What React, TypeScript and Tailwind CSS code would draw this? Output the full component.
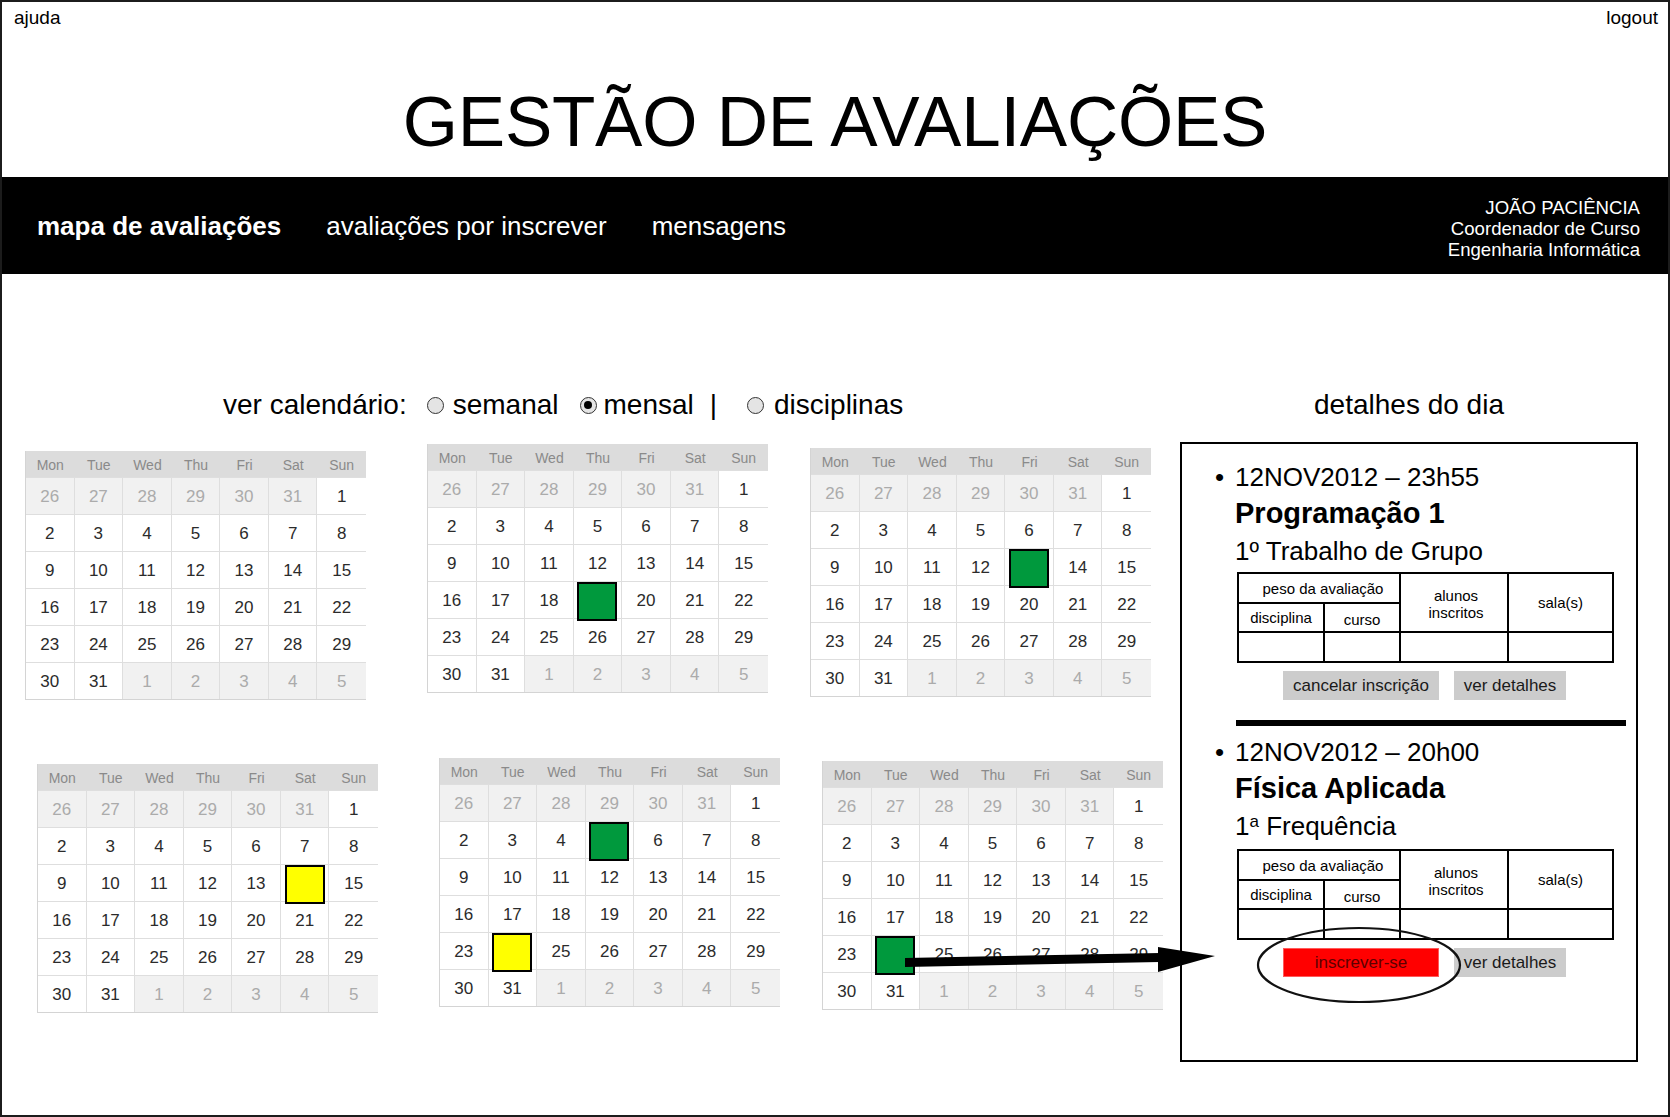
import React from "react";

type Mark = { day: number; color: "green" | "yellow" };

const WEEKDAYS = ["Mon", "Tue", "Wed", "Thu", "Fri", "Sat", "Sun"];

// 26..31 of previous month, 1..31, then 1..5 of next month
const CELLS: { n: number; current: boolean }[] = [
  ...[26, 27, 28, 29, 30, 31].map((n) => ({ n, current: false })),
  ...Array.from({ length: 31 }, (_, i) => ({ n: i + 1, current: true })),
  ...[1, 2, 3, 4, 5].map((n) => ({ n, current: false })),
];

function MonthCalendar({
  marks = [],
  className = "",
}: {
  marks?: Mark[];
  className?: string;
}) {
  return (
    <div className={`w-[341px] border-b border-l border-[#d4d4d4] ${className}`}>
      <div className="grid h-[26px] grid-cols-7 bg-[#dcdcdc] pt-[2px] text-[14px] text-[#8a8a8a]">
        {WEEKDAYS.map((w) => (
          <div key={w} className="flex items-center justify-center">
            {w}
          </div>
        ))}
      </div>
      <div className="grid grid-cols-7">
        {CELLS.map((c, i) => {
          const mark = c.current ? marks.find((m) => m.day === c.n) : undefined;
          const lastCol = i % 7 === 6;
          return (
            <div
              key={i}
              className={`flex h-[37px] items-center justify-center border-t border-[#dedede] pt-[1px] text-[17px] ${
                lastCol ? "" : "border-r"
              } ${c.current ? "bg-white text-[#2b2b2b]" : "bg-[#f1f1f1] text-[#ababab]"}`}
            >
              {mark ? (
                <span
                  className={`relative z-10 h-[39px] w-[40px] translate-y-[1px] border-2 border-black ${
                    mark.color === "green" ? "bg-[#00993d]" : "bg-[#ffff00]"
                  }`}
                />
              ) : (
                c.n
              )}
            </div>
          );
        })}
      </div>
    </div>
  );
}

function Radio({ checked, className = "" }: { checked?: boolean; className?: string }) {
  return (
    <span
      className={`flex h-[17px] w-[17px] items-center justify-center rounded-full border-[1.5px] border-[#333] bg-[#e4e4e4] ${className}`}
    >
      {checked ? <span className="h-[8px] w-[8px] rounded-full bg-black" /> : null}
    </span>
  );
}

function InfoTable({ className = "" }: { className?: string }) {
  const cell = "border-2 border-black p-0 text-center align-middle";
  return (
    <table
      className={`ml-[2px] w-[375px] table-fixed border-collapse text-[15px] leading-[17px] ${className}`}
    >
      <colgroup>
        <col className="w-[86px]" />
        <col className="w-[76px]" />
        <col className="w-[108px]" />
        <col className="w-[105px]" />
      </colgroup>
      <tbody>
        <tr className="h-[30px]">
          <td colSpan={2} className={`${cell} pl-[8px]`}>
            peso da avaliação
          </td>
          <td rowSpan={2} className={`${cell} pl-[4px] pt-[3px]`}>
            alunos
            <br />
            inscritos
          </td>
          <td rowSpan={2} className={cell}>
            sala(s)
          </td>
        </tr>
        <tr className="h-[29px]">
          <td className={cell}>disciplina</td>
          <td className={`${cell} pt-[3px]`}>curso</td>
        </tr>
        <tr className="h-[30px]">
          <td className={cell} />
          <td className={cell} />
          <td className={cell} />
          <td className={cell} />
        </tr>
      </tbody>
    </table>
  );
}

function Entry({
  date,
  title,
  subtitle,
  tableClass,
  primary,
}: {
  date: string;
  title: string;
  subtitle: React.ReactNode;
  tableClass: string;
  primary: "cancel" | "subscribe";
}) {
  return (
    <div className="pl-[53px]">
      <div className="flex text-[26px] leading-[35px]">
        <span className="-ml-[20px] w-[20px]">•</span>
        <span>{date}</span>
      </div>
      <div className="text-[29px] font-bold leading-[37px]">{title}</div>
      <div className="text-[26px] leading-[39px]">{subtitle}</div>
      <InfoTable className={tableClass} />
      <div className="ml-[2px] mt-[8px] flex w-[375px] justify-center gap-[15px] text-[17px]">
        {primary === "cancel" ? (
          <span className="flex h-[29px] w-[156px] items-center justify-center bg-[#cccccc] text-[#1a1a1a]">
            cancelar inscrição
          </span>
        ) : (
          <span className="relative flex h-[29px] w-[156px] items-center justify-center border border-[#ff5a5a] bg-[#ff0000] text-[#5c0000]">
            inscrever-se
            <svg
              className="absolute left-[-28px] top-[-23px] z-10 overflow-visible"
              width="206"
              height="78"
              viewBox="0 0 206 78"
            >
              <ellipse cx="103" cy="39" rx="101" ry="37" fill="none" stroke="#111" strokeWidth="2.2" />
            </svg>
          </span>
        )}
        <span className="flex h-[29px] w-[112px] items-center justify-center bg-[#cccccc] text-[#1a1a1a]">
          ver detalhes
        </span>
      </div>
    </div>
  );
}

export default function App() {
  return (
    <div className="relative h-[1117px] w-[1670px] overflow-hidden border-2 border-[#1c1c1c] bg-white font-['Liberation_Sans',Arial,sans-serif] text-black">
      {/* top links */}
      <div className="flex justify-between pl-[12px] pr-[10px] pt-[5px] text-[19px] leading-[21px]">
        <span>ajuda</span>
        <span>logout</span>
      </div>

      <h1 className="mt-[54px] text-center text-[71px] leading-[80px] tracking-[-0.25px]">
        GESTÃO DE AVALIAÇÕES
      </h1>

      {/* nav band */}
      <nav className="mt-[15px] flex h-[97px] items-center justify-between bg-black pl-[35px] pr-[28px] text-white">
        <div className="flex items-center gap-[45px] text-[26px] leading-[30px]">
          <span className="font-bold">mapa de avaliações</span>
          <span>avaliações por inscrever</span>
          <span>mensagens</span>
        </div>
        <div className="pt-[5px] text-right text-[18.6px] leading-[21px]">
          <div>JOÃO PACIÊNCIA</div>
          <div>Coordenador de Curso</div>
          <div>Engenharia Informática</div>
        </div>
      </nav>

      <main className="flex pt-[115px]">
        {/* calendars */}
        <section className="w-[1178px]">
          <div className="flex h-[32px] items-center pl-[221px] text-[28px] leading-[32px]">
            <span>ver calendário:</span>
            <Radio className="ml-[20px]" />
            <span className="ml-[9px]">semanal</span>
            <Radio checked className="ml-[21px]" />
            <span className="ml-[7px]">mensal</span>
            <span className="ml-[16px]">|</span>
            <Radio className="ml-[30px]" />
            <span className="ml-[10px]">disciplinas</span>
          </div>

          <div className="flex items-start pl-[23px]">
            <MonthCalendar className="mt-[30px]" />
            <MonthCalendar className="ml-[61px] mt-[23px]" marks={[{ day: 19, color: "green" }]} />
            <MonthCalendar className="ml-[42px] mt-[27px]" marks={[{ day: 13, color: "green" }]} />
          </div>

          <div className="flex items-start pl-[35px]">
            <MonthCalendar className="mt-[64px]" marks={[{ day: 14, color: "yellow" }]} />
            <MonthCalendar
              className="ml-[61px] mt-[58px]"
              marks={[
                { day: 5, color: "green" },
                { day: 24, color: "yellow" },
              ]}
            />
            <MonthCalendar className="ml-[42px] mt-[61px]" marks={[{ day: 24, color: "green" }]} />
          </div>
        </section>

        {/* day details */}
        <section className="w-[458px]">
          <div className="h-[32px] text-center text-[28px] leading-[32px]">detalhes do dia</div>
          <div className="mt-[21px] h-[620px] w-[458px] border-2 border-black pt-[16px]">
            <Entry
              date="12NOV2012 – 23h55"
              title="Programação 1"
              subtitle="1º Trabalho de Grupo"
              tableClass="mt-[1px]"
              primary="cancel"
            />
            <div className="ml-[54px] mt-[20px] h-[6px] w-[390px] bg-black" />
            <div className="mt-[9px]">
              <Entry
                date="12NOV2012 – 20h00"
                title="Física Aplicada"
                subtitle={
                  <>
                    1<sup className="text-[17px]">a</sup> Frequência
                  </>
                }
                tableClass="mt-[3px]"
                primary="subscribe"
              />
            </div>
          </div>
        </section>
      </main>

      {/* arrow from the marked day to the subscribe button */}
      <svg
        className="absolute left-[893px] top-[938px] z-20"
        width="330"
        height="40"
        viewBox="0 0 330 40"
      >
        <polygon points="10,18 265,13 265,22 10,27" fill="#000" />
        <polygon points="263,7 320,16 263,32" fill="#000" />
      </svg>
    </div>
  );
}
